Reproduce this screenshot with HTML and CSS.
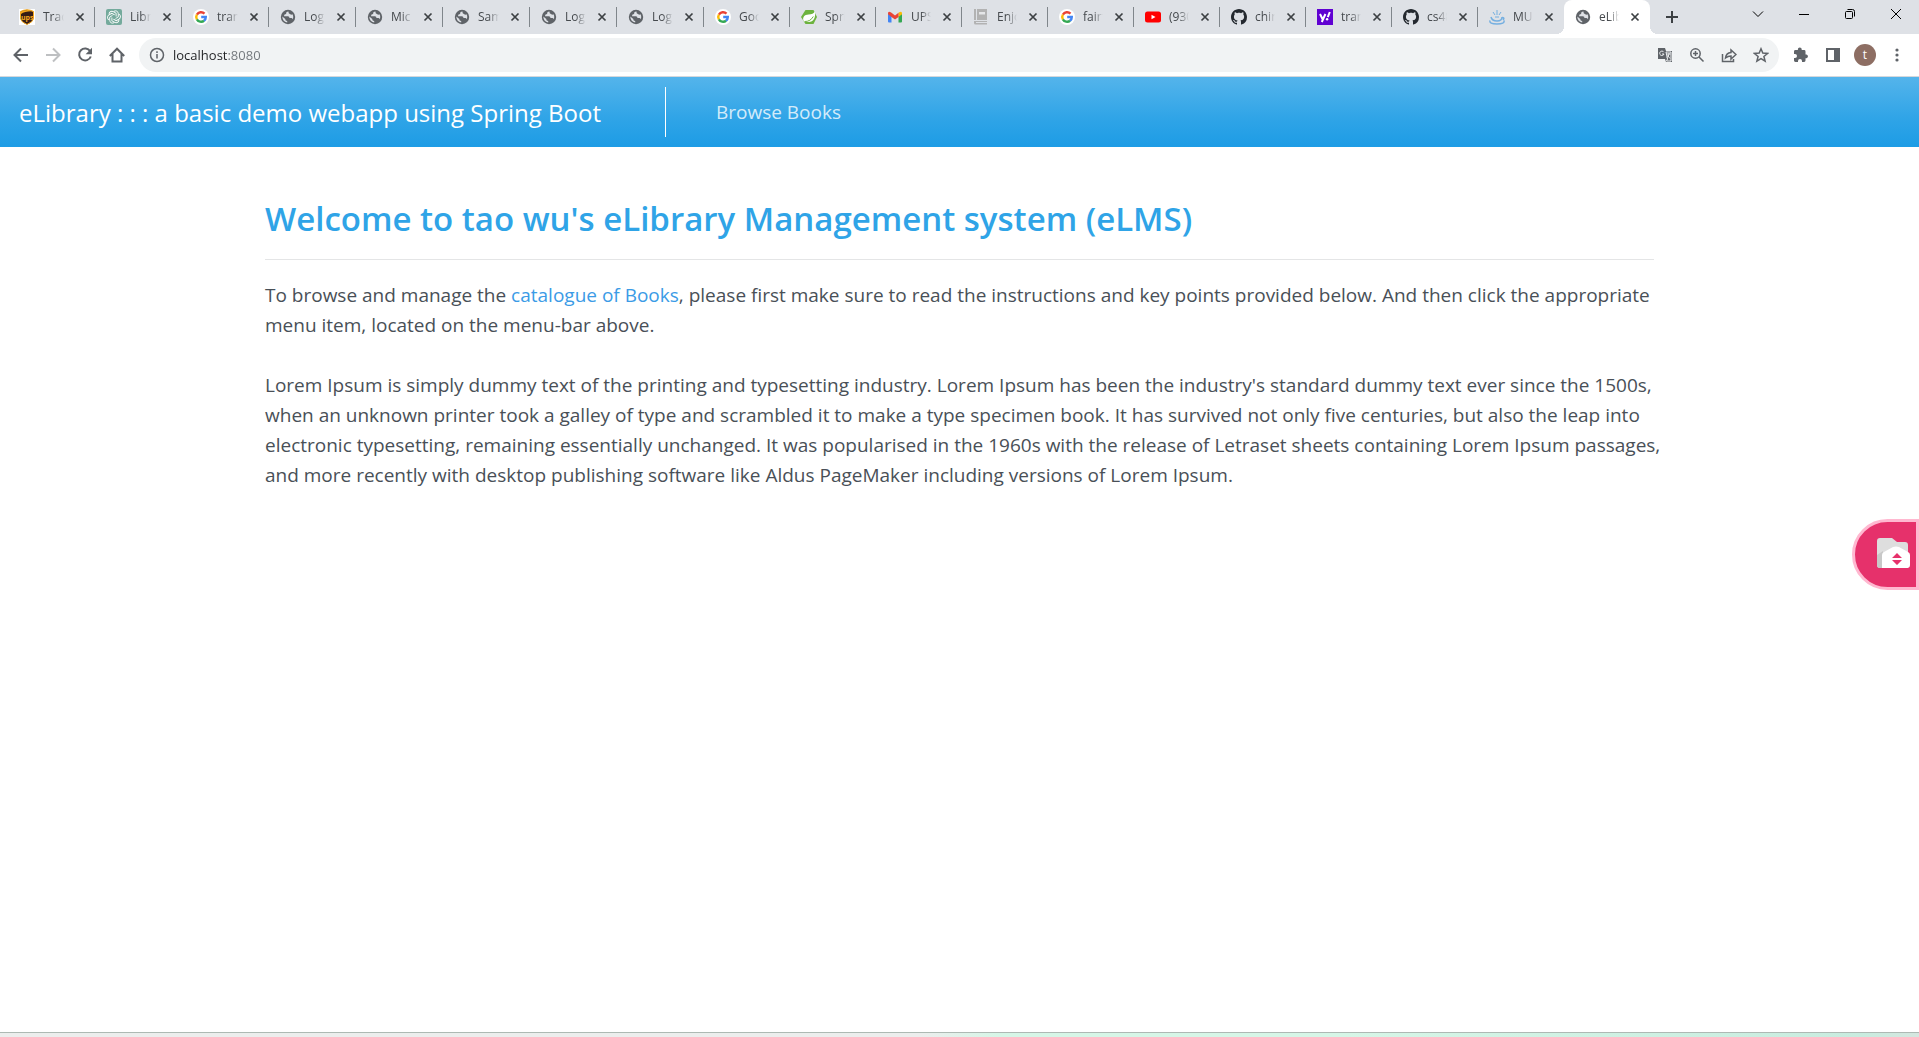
FILE: index.html
```html
<!DOCTYPE html>
<html lang="en">
<head>
<meta charset="utf-8">
<title>eLibrary</title>
<link rel="stylesheet" href="styles.css">
</head>
<body>
<svg class="defs" aria-hidden="true">
  <symbol id="x" viewBox="0 0 16 16"><path d="M4.500 4.500l7 7M11.500 4.500l-7 7" stroke="#3c4043" stroke-width="1.700"/></symbol>
  <symbol id="globe" viewBox="0 0 16 16"><circle cx="8" cy="8" r="7.200" fill="#5f6368"/><path d="M8.500 2.500c-2 .3-2.600 1.200-2.300 2.500-1.400 0-2.200.9-2.100 2.200h3.700c1.200 0 1.700.8 1.600 1.900h1.500c1 0 1.500.4 1.800 1.100.8-1.700.7-3.400-.2-4.900-.8.6-1.600.5-2.200 0L8.700 4.300zM2.300 7.500c0 3 1.700 5.400 4.900 6v-1.600c-1.300-.1-1.900-.8-1.900-2z" fill="#dee1e6"/></symbol>
  <symbol id="google" viewBox="0 0 16 16"><circle cx="8" cy="8" r="8" fill="#fff"/><g fill="none" stroke-width="2.400"><path d="M3.900 5.700A4.800 4.800 0 0 1 11.500 4.700" stroke="#ea4335"/><path d="M3.900 5.600a4.800 4.800 0 0 0 0 4.800" stroke="#fbbc05"/><path d="M3.900 10.300a4.800 4.800 0 0 0 7.200 1.400" stroke="#34a853"/><path d="M11 11.800A4.800 4.800 0 0 0 12.800 8H8.200" stroke="#4285f4"/></g></symbol>
  <symbol id="github" viewBox="0 0 16 16"><path fill="#24292f" d="M8 0C3.580 0 0 3.580 0 8c0 3.540 2.290 6.530 5.470 7.590.4.070.55-.17.55-.38 0-.19-.01-.82-.01-1.490-2.010.37-2.530-.49-2.690-.94-.09-.23-.48-.94-.82-1.130-.28-.15-.68-.52-.01-.53.63-.01 1.080.58 1.230.82.72 1.210 1.870.87 2.330.66.070-.52.280-.87.510-1.070-1.780-.2-3.640-.89-3.640-3.950 0-.87.310-1.590.82-2.150-.08-.2-.36-1.020.08-2.120 0 0 .67-.21 2.200.82.640-.18 1.320-.27 2-.27s1.360.09 2 .27c1.530-1.040 2.200-.82 2.200-.82.440 1.100.160 1.920.080 2.120.510.560.820 1.270.820 2.150 0 3.070-1.870 3.750-3.650 3.950.290.250.540.730.540 1.480 0 1.070-.01 1.930-.01 2.200 0 .210.150.460.550.380A8.010 8.010 0 0 0 16 8c0-4.420-3.580-8-8-8z"/></symbol>
</svg>

<header class="browser">
  <div class="strip">
    <nav class="tabs" aria-label="Open tabs">
      <div class="tab"><svg class="fav" viewBox="0 0 16 16"><path fill="#fff" d="M0 0h16v16H0z"/><path fill="#351c15" stroke="#f5a81c" d="M1.500 2.500Q8-1 14.500 2.500v7Q14 13 8 15.500 2 13 1.500 9.500z"/><path d="M2 5Q6 2 14 2.400V2Q8-.3 2 2.600z" fill="#f5a81c"/><text x="2" y="11" class="ups">ups</text></svg><a href="#">Trac</a><button aria-label="Close tab"><svg><use href="#x"/></svg></button></div>
      <div class="tab"><svg class="fav" viewBox="0 0 16 16"><rect width="16" height="16" rx="2" fill="#74aa9c"/><g fill="none" stroke="#fff" stroke-width=".9"><g id="petal"><path d="M8 2.300a2.800 2.800 0 0 1 4.300 2.400v3.200L9.500 9.600"/></g><use href="#petal" transform="rotate(60 8 8)"/><use href="#petal" transform="rotate(120 8 8)"/><use href="#petal" transform="rotate(180 8 8)"/><use href="#petal" transform="rotate(240 8 8)"/><use href="#petal" transform="rotate(300 8 8)"/></g></svg><a href="#">Libr</a><button aria-label="Close tab"><svg><use href="#x"/></svg></button></div>
      <div class="tab"><svg class="fav"><use href="#google"/></svg><a href="#">tran</a><button aria-label="Close tab"><svg><use href="#x"/></svg></button></div>
      <div class="tab"><svg class="fav"><use href="#globe"/></svg><a href="#">Log</a><button aria-label="Close tab"><svg><use href="#x"/></svg></button></div>
      <div class="tab"><svg class="fav"><use href="#globe"/></svg><a href="#">Mic</a><button aria-label="Close tab"><svg><use href="#x"/></svg></button></div>
      <div class="tab"><svg class="fav"><use href="#globe"/></svg><a href="#">Sam</a><button aria-label="Close tab"><svg><use href="#x"/></svg></button></div>
      <div class="tab"><svg class="fav"><use href="#globe"/></svg><a href="#">Log</a><button aria-label="Close tab"><svg><use href="#x"/></svg></button></div>
      <div class="tab"><svg class="fav"><use href="#globe"/></svg><a href="#">Log</a><button aria-label="Close tab"><svg><use href="#x"/></svg></button></div>
      <div class="tab"><svg class="fav"><use href="#google"/></svg><a href="#">Goo</a><button aria-label="Close tab"><svg><use href="#x"/></svg></button></div>
      <div class="tab"><svg class="fav" viewBox="0 0 16 16"><path fill="#6db33f" d="M4.500 1h8l3.500 7-3.500 7h-8L0 8z"/><path fill="#fff" d="M14 2.500c.8 6-1.200 10.500-6.500 10.500H3.400l-1-1.400C1.400 8 3.500 5.800 7.500 5.500 10.700 5.300 12.800 4.400 14 2.500z"/><path d="M3.500 12.500c4 .2 7-1.700 8.800-5" fill="none" stroke="#6db33f"/></svg><a href="#">Spri</a><button aria-label="Close tab"><svg><use href="#x"/></svg></button></div>
      <div class="tab"><svg class="fav" viewBox="0 0 16 16"><path d="M1 4.500l3.500 2.700V13.500H2q-1 0-1-1z" fill="#4285f4"/><path d="M11.500 7.200L15 4.500v8q0 1-1 1h-2.500z" fill="#34a853"/><path d="M11.500 3.800Q15 1.300 15 4.500v.7l-3.500 2.700z" fill="#fbbc04"/><path d="M1 5.200Q.5 1 4.500 3.800L8 6.400l3.500-2.600v4.100L8 10.500 4.500 7.900z" fill="#ea4335"/></svg><a href="#">UPS</a><button aria-label="Close tab"><svg><use href="#x"/></svg></button></div>
      <div class="tab"><svg class="fav" viewBox="0 0 16 16"><path fill="#b2b2b2" d="M1 0h2v11H1zM4 0h10v11H4zM1 12h13v1H3v1h11v1.500H2.500Q1 15.500 1 14z"/><path fill="#e5e6e8" d="M6 3h6v2.500H6z"/></svg><a href="#">Enjo</a><button aria-label="Close tab"><svg><use href="#x"/></svg></button></div>
      <div class="tab"><svg class="fav"><use href="#google"/></svg><a href="#">fairf</a><button aria-label="Close tab"><svg><use href="#x"/></svg></button></div>
      <div class="tab"><svg class="fav" viewBox="0 0 16 16"><rect y="2.500" width="16" height="11" rx="2.500" fill="#f00"/><path d="M6.500 5.700l4 2.300-4 2.300z" fill="#fff"/></svg><a href="#">(930</a><button aria-label="Close tab"><svg><use href="#x"/></svg></button></div>
      <div class="tab"><svg class="fav"><use href="#github"/></svg><a href="#">chin</a><button aria-label="Close tab"><svg><use href="#x"/></svg></button></div>
      <div class="tab"><svg class="fav" viewBox="0 0 16 16"><path fill="#6001d2" d="M0 0h16v16H0z"/><path d="M3 5l2.500 5M8.400 5l-3.600 8M12.800 3l-2 5.200" stroke="#fff" stroke-width="2"/><circle cx="10.100" cy="10.300" r="1.200" fill="#fff"/></svg><a href="#">tran</a><button aria-label="Close tab"><svg><use href="#x"/></svg></button></div>
      <div class="tab"><svg class="fav"><use href="#github"/></svg><a href="#">cs48</a><button aria-label="Close tab"><svg><use href="#x"/></svg></button></div>
      <div class="tab last"><svg class="fav" viewBox="0 0 16 16"><g fill="none" stroke="#75afe0" stroke-width="1.500"><path d="M2 8q1 4 6 4t5-4M1 11.500Q0 15 8 15t7-3.500M13 8.500q3 0 1 2.500"/><path d="M4 3l2 3M8 1v5M12 3l-2 3M6 8h4" stroke-width="1"/></g></svg><a href="#">MU</a><button aria-label="Close tab"><svg><use href="#x"/></svg></button></div>
      <div class="tab active"><svg class="fav"><use href="#globe"/></svg><a href="#" aria-current="page">eLib</a><button aria-label="Close tab"><svg><use href="#x"/></svg></button></div>
    </nav>
    <button class="newtab" aria-label="New tab"><svg viewBox="0 0 16 16"><path d="M8 2v12M2 8h12" stroke="#3c4043" stroke-width="2"/></svg></button>
    <div class="window">
      <button aria-label="Search tabs"><svg viewBox="0 0 12 12"><path d="M1 3.500l5 5 5-5"/></svg></button>
      <button aria-label="Minimize"><svg viewBox="0 0 12 12"><path d="M1 6.500h10"/></svg></button>
      <button aria-label="Restore"><svg viewBox="0 0 12 12"><rect x="1.500" y="3.500" width="7" height="7" rx="1"/><path d="M3.500 1.500h5q2 0 2 2v5"/></svg></button>
      <button aria-label="Close"><svg viewBox="0 0 12 12"><path d="M1 1l10 10M11 1L1 11"/></svg></button>
    </div>
  </div>

  <div class="toolbar">
    <button aria-label="Back"><svg viewBox="0 0 16 16"><path d="M15 8H2M8 1.500L1.500 8 8 14.500"/></svg></button>
    <button class="off" aria-label="Forward"><svg viewBox="0 0 16 16"><path d="M1 8h13M8 1.500L14.500 8 8 14.500"/></svg></button>
    <button aria-label="Reload"><svg viewBox="0 0 16 16"><path d="M13.200 4.200A6 6 0 1 0 13.800 9.500"/><path class="solid" d="M15 .8v6.400H8.600z"/></svg></button>
    <button aria-label="Home"><svg viewBox="0 0 16 16"><path d="M.8 9L8 1.700 15.200 9M3.500 7v7.500h9V7"/></svg></button>
    <form class="address">
      <svg viewBox="0 0 16 16" class="info"><circle cx="8" cy="8" r="6.500"/><path d="M8 7v4.500M8 4.200v1.700"/></svg>
      <input type="text" aria-label="Address" value="localhost:8080">
      <button type="button" aria-label="Translate"><svg viewBox="0 0 16 16"><path class="solid" d="M1 1h7l1 3h6v11H9l-1-3H1z"/><path class="cut" d="M9 5h5v9H9.500l1-2zM9.500 7h4M12 6v1q-.5 2.500-2 3.500M10.500 8.500l2.500 3M6.800 5.200A2.200 2.200 0 1 0 7 7H5"/></svg></button>
      <button type="button" aria-label="Zoom"><svg viewBox="0 0 16 16" class="thin"><circle cx="6.500" cy="6.500" r="4.700"/><path d="M10 10l4.500 4.500M4 6.500h5M6.500 4v5"/></svg></button>
      <button type="button" aria-label="Share"><svg viewBox="0 0 16 16" class="thin"><path d="M1.500 7v7.500h11V12M4.500 11q.5-5 5.500-5.500V3l5 4.500L10 12V9q-3 0-5.500 2z"/></svg></button>
      <button type="button" aria-label="Bookmark"><svg viewBox="0 0 16 16" class="thin"><path d="M8 1.800l1.800 4.300 4.700.4-3.600 3 1.200 4.600L8 11.600l-4.100 2.500 1.200-4.600-3.600-3 4.700-.4z"/></svg></button>
    </form>
    <button aria-label="Extensions"><svg viewBox="0 0 16 16"><path class="solid" d="M13.500 7.500h-1V4.400q0-1.400-1.400-1.400H8.700V2.300a1.900 1.900 0 0 0-3.800 0V3H2.400Q1 3 1 4.400v2.500h1a2 2 0 0 1 0 4H1v2.700Q1 15 2.400 15H5v-1a2 2 0 0 1 4 0v1h2.100q1.400 0 1.400-1.400v-2.400h1a1.900 1.900 0 0 0 0-3.700z"/></svg></button>
    <button aria-label="Side panel"><svg viewBox="0 0 16 16"><path d="M2 2h12v12H2z"/><path class="solid" d="M9 2h5v12H9z"/></svg></button>
    <button class="avatar" aria-label="Profile">t</button>
    <button aria-label="Menu"><svg viewBox="0 0 16 16"><g class="solid"><circle cx="8" cy="3" r="1.600"/><circle cx="8" cy="8" r="1.600"/><circle cx="8" cy="13" r="1.600"/></g></svg></button>
  </div>
</header>

<nav class="navbar">
  <a class="brand" href="#">eLibrary : : : a basic demo webapp using Spring Boot</a>
  <a class="link" href="#">Browse Books</a>
</nav>

<main>
  <h1>Welcome to tao wu's eLibrary Management system (eLMS)</h1>
  <hr>
  <p>To browse and manage the <a href="#">catalogue of Books</a>, please first make sure to read the instructions and key points provided below. And then click the appropriate<br>menu item, located on the menu-bar above.</p>
  <p>Lorem Ipsum is simply dummy text of the printing and typesetting industry. Lorem Ipsum has been the industry's standard dummy text ever since the 1500s,<br>when an unknown printer took a galley of type and scrambled it to make a type specimen book. It has survived not only five centuries, but also the leap into<br>electronic typesetting, remaining essentially unchanged. It was popularised in the 1960s with the release of Letraset sheets containing Lorem Ipsum passages,<br>and more recently with desktop publishing software like Aldus PageMaker including versions of Lorem Ipsum.</p>
</main>

<button class="floating" aria-label="Open folder"><svg viewBox="0 0 34 32"><path fill="#dedede" d="M0 3q0-3 3-3h12l5 4h8q3 0 3 3v23H3q-3 0-3-3z"/><path fill="#c8c8c8" d="M0 17l6-4v17H3q-3 0-3-3z"/><path fill="#fff" d="M5 17q0-2 2-3l9-5q3-1 6 0l9 5q2 1 2 3v10q0 3-3 3H5z"/><path fill="#e6316b" d="M15 20l5-5 5 5zM15 22h10l-5 5z"/></svg></button>
<footer></footer>
</body>
</html>
```
FILE: styles.css
```css
* { box-sizing: border-box; }
body {
  margin: 0;
  min-height: 100vh;
  display: flex;
  flex-direction: column;
  background: #fff;
  color: #495057;
  font: 19px/30px "Open Sans", "Noto Sans", sans-serif;
}
a { color: inherit; text-decoration: none; }
button { padding: 0; border: 0; background: none; font: inherit; color: inherit; }
svg { display: block; fill: none; }
.defs { position: absolute; width: 0; height: 0; }

/* Browser frame */
.browser { font-size: 12px; line-height: 16px; }
.strip { display: flex; height: 34px; background: #dee1e6; padding-left: 8px; }
.tabs { display: flex; flex: 1; min-width: 0; }
.tab {
  display: flex;
  flex: 1 1 86px;
  min-width: 0;
  align-items: center;
  padding: 0 7px 0 11px;
  gap: 8px;
  color: #45494d;
  background: linear-gradient(#80868b, #80868b) no-repeat right 7px / 1px 20px;
}
.tab:nth-child(-n+8) { flex-basis: 87px; }
.tab a {
  flex: 1;
  min-width: 0;
  overflow: hidden;
  white-space: nowrap;
  -webkit-mask-image: linear-gradient(90deg, #000 50%, transparent);
  mask-image: linear-gradient(90deg, #000 50%, transparent);
}
.fav, .tab button, .tab button svg { width: 16px; height: 16px; flex: none; }
.ups { font: bold 7px "Open Sans", sans-serif; fill: #f5a81c; }
.tab.last { background: none; }
.tab.active {
  position: relative;
  background: #fff;
  border-radius: 8px 8px 0 0;
}
.tab.active::before, .tab.active::after {
  content: "";
  position: absolute;
  bottom: 0;
  width: 8px;
  height: 8px;
}
.tab.active::before { left: -8px; background: radial-gradient(circle at 0 0, #dee1e6 8px, #fff 8px); }
.tab.active::after { right: -8px; background: radial-gradient(circle at 100% 0, #dee1e6 8px, #fff 8px); }
.newtab { width: 44px; display: grid; place-items: center; }
.newtab svg { width: 16px; height: 16px; }
.window { display: flex; height: 28px; margin-left: 41px; }
.window button { width: 46px; display: grid; place-items: center; }
.window svg { width: 12px; height: 12px; stroke: #000; }

.toolbar {
  display: flex;
  align-items: center;
  gap: 8px;
  height: 43px;
  padding: 0 10px 1px 9px;
  background: #fff;
  border-bottom: 1px solid #d5d8dc;
}
.toolbar button { flex: none; width: 24px; height: 24px; display: grid; place-items: center; }
.toolbar svg { width: 16px; height: 16px; stroke: #5f6368; stroke-width: 2; }
.toolbar .thin, .toolbar .info { stroke-width: 1.5; }
.toolbar .off { opacity: .4; }
.toolbar .solid { fill: #5f6368; stroke: none; }
.toolbar .cut { stroke: #f1f3f4; stroke-width: 1; }
.address {
  flex: 1;
  display: flex;
  align-items: center;
  gap: 8px;
  height: 34px;
  margin: 0 2px;
  padding: 0 6px 0 10px;
  border-radius: 17px;
  background: #f1f3f4;
}
.address input {
  flex: 1;
  min-width: 0;
  border: 0;
  padding: 0;
  font: 13px/20px "Open Sans", sans-serif;
  color: transparent;
  background: linear-gradient(90deg, #202124 54px, #70757a 54px);
  -webkit-background-clip: text;
  background-clip: text;
}
.toolbar .avatar { width: 22px; height: 22px; margin: 0 1px; border-radius: 50%; background: #8d6e63; color: #fff; }

/* Page */
.navbar {
  display: flex;
  align-items: center;
  height: 70px;
  padding-left: 19px;
  background: linear-gradient(#54b4eb, #2fa4e7 60%, #1d9ce5);
  color: #fff;
}
.brand {
  height: 50px;
  padding-right: 64px;
  border-right: 1px solid #fff;
  font-size: 24px;
  line-height: 52px;
}
.link { padding: 0 50px; line-height: 32px; color: rgba(255, 255, 255, .8); }
main {
  width: 100%;
  max-width: 1389px;
  margin: 0 auto;
  padding-top: 51px;
  white-space: nowrap;
}
h1 { margin: 0; font-size: 33px; line-height: 42px; font-weight: 600; color: #2fa4e7; }
hr { margin: 19px 0 20px; border: 0; border-top: 1px solid #e4e5e6; }
p { margin: 0 0 30px; }
p a { color: #3b9be6; }
.floating {
  position: fixed;
  right: 0;
  top: 50%;
  width: 67px;
  height: 71px;
  border: 3px solid #ffb8d0;
  border-radius: 36px 0 0 36px;
  background: #e6316b;
  padding-left: 22px;
}
.floating svg { width: 34px; height: 32px; }
footer {
  height: 5px;
  margin-top: auto;
  border-top: 1px solid #adb9b3;
  background: linear-gradient(90deg, #eceeed 48%, #d6f6e7 52%, #d6f6e7 70%, #c8ecdf 97%, #d5e6df);
}
```
